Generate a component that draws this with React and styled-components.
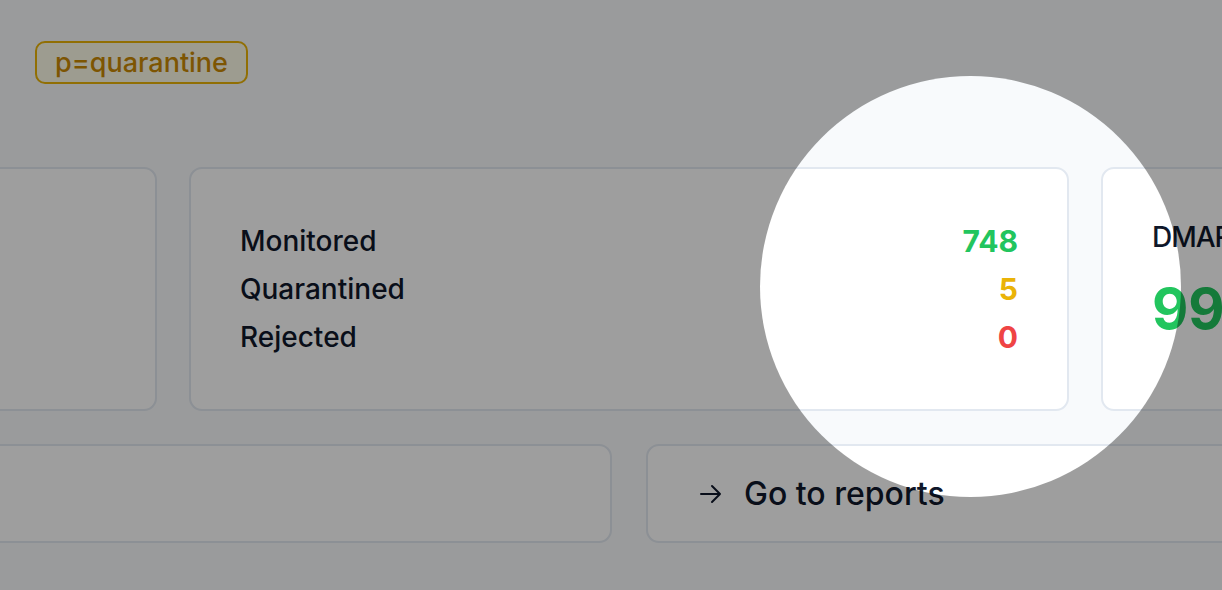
import styled, { createGlobalStyle } from "styled-components";

const GlobalStyle = createGlobalStyle`
  html, body {
    margin: 0;
    padding: 0;
    background: #f8fafc;
  }
`;

const Page = styled.div`
  position: relative;
  width: 1222px;
  height: 590px;
  overflow: hidden;
  background: #f8fafc;
  font-family: Inter, "Noto Sans", sans-serif;
  color: #0f172a;
`;

const Header = styled.div`
  display: flex;
  align-items: center;
  padding: 41px 0 0 35px;
`;

const Badge = styled.span`
  display: inline-flex;
  align-items: center;
  box-sizing: border-box;
  height: 43px;
  padding: 0 18px;
  border: 2px solid #eab308;
  border-radius: 10px;
  background: #fefce8;
  color: #ca8a04;
  font-size: 27px;
  font-weight: 500;
`;

const Board = styled.div`
  display: grid;
  gap: 33px;
  width: 2704px;
  margin: 83px 0 0 -723px;
`;

const Row = styled.div`
  display: grid;
  grid-template-columns: repeat(${(p) => p.$cols}, 1fr);
  gap: ${(p) => p.$gap}px;
`;

const Card = styled.div`
  box-sizing: border-box;
  background: #ffffff;
  border: 2px solid #e2e8f0;
  border-radius: 13px;
  padding: ${(p) => p.$pad};
`;

const StatRow = styled.div`
  display: flex;
  justify-content: space-between;
  align-items: center;
  height: 48px;
  font-size: 28px;
  font-weight: 500;
`;

const StatValue = styled.span`
  font-size: 30px;
  font-weight: 700;
  color: ${(p) => p.$color};
`;

const CardTitle = styled.div`
  font-size: 28px;
  line-height: 40px;
  font-weight: 500;
  letter-spacing: -1px;
  white-space: nowrap;
`;

const BigNumber = styled.div`
  margin-top: 16px;
  font-size: 56px;
  line-height: 72px;
  font-weight: 700;
  color: #22c55e;
`;

const Action = styled.div`
  display: flex;
  align-items: center;
  gap: 22px;
  height: 35px;
  font-size: 32px;
  font-weight: 500;
`;

const Spotlight = styled.div`
  position: absolute;
  left: 760px;
  top: 76px;
  width: 421px;
  height: 421px;
  border-radius: 50%;
  box-shadow: 0 0 0 2000px rgba(0, 0, 0, 0.38);
  pointer-events: none;
`;

const stats = [
  { label: "Monitored", value: 748, color: "#22c55e" },
  { label: "Quarantined", value: 5, color: "#eab308" },
  { label: "Rejected", value: 0, color: "#ef4444" },
];

const Arrow = () => (
  <svg width="22" height="20" viewBox="0 0 22 20" fill="none">
    <path
      d="M1 10h19M12 2l8 8-8 8"
      stroke="#0f172a"
      strokeWidth="2"
      strokeLinecap="round"
      strokeLinejoin="round"
    />
  </svg>
);

const App = () => (
  <Page>
    <GlobalStyle />
    <Header>
      <Badge>p=quarantine</Badge>
    </Header>
    <Board>
      <Row $cols={3} $gap={32}>
        <Card $pad="48px 49px" />
        <Card $pad="48px 49px">
          {stats.map((s) => (
            <StatRow key={s.label}>
              <span>{s.label}</span>
              <StatValue $color={s.color}>{s.value}</StatValue>
            </StatRow>
          ))}
        </Card>
        <Card $pad="48px 49px">
          <CardTitle>DMARC compliance</CardTitle>
          <BigNumber>99%</BigNumber>
        </Card>
      </Row>
      <Row $cols={2} $gap={34}>
        <Card $pad="30px 52px">
          <Action />
        </Card>
        <Card $pad="30px 52px">
          <Action>
            <Arrow />
            <span>Go to reports</span>
          </Action>
        </Card>
      </Row>
    </Board>
    <Spotlight />
  </Page>
);

export default App;
